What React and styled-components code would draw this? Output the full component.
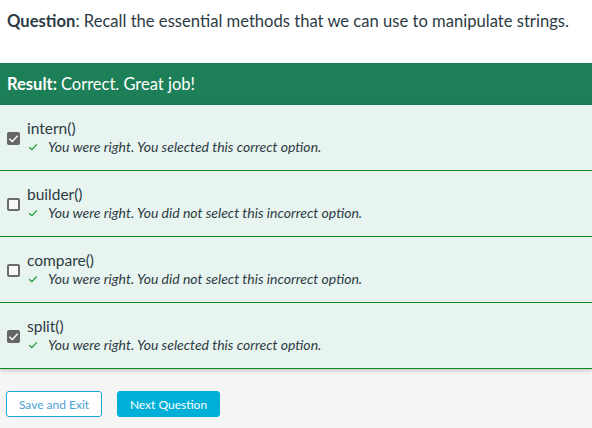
import React from 'react';
import styled, { createGlobalStyle } from 'styled-components';

const GlobalStyle = createGlobalStyle`
  html, body {
    margin: 0;
    padding: 0;
    background: #ffffff;
    font-family: Lato, "Open Sans", sans-serif;
    color: #2d3b45;
  }
`;

const Page = styled.div`
  width: 592px;
  height: 428px;
  display: flex;
  flex-direction: column;
  overflow: hidden;
`;

const Question = styled.div`
  padding: 10px 7px 0 7px;
  height: 53px;
  font-size: 16.6px;
  line-height: 22px;
  color: #2d3b45;
  box-sizing: border-box;
  white-space: nowrap;

  b {
    font-weight: 700;
  }
`;

const ResultBar = styled.div`
  height: 42px;
  background: #1d7f57;
  color: #ffffff;
  display: flex;
  align-items: center;
  padding: 0 7px;
  font-size: 16.5px;
  margin-top: 10px;

  b {
    font-weight: 700;
    margin-right: 4px;
  }
`;

const Options = styled.div`
  display: flex;
  flex-direction: column;
  box-shadow: 0 2px 4px rgba(0, 0, 0, 0.18);
  position: relative;
  z-index: 1;
`;

const Row = styled.div`
  height: 66px;
  box-sizing: border-box;
  background: #e8f4ef;
  border-bottom: 1px solid #0b8a1d;
  display: flex;
  align-items: center;
  padding-left: 7px;
`;

const Box = styled.span`
  width: 13px;
  height: 13px;
  box-sizing: border-box;
  border-radius: 2px;
  flex: 0 0 13px;
  margin-right: 7px;
  margin-top: 2px;
  display: flex;
  align-items: center;
  justify-content: center;
  background: ${(p) => (p.$checked ? '#666666' : '#f8f8f8')};
  border: ${(p) => (p.$checked ? 'none' : '2px solid #6a6a6a')};
`;

const Content = styled.div`
  display: flex;
  flex-direction: column;
`;

const Title = styled.div`
  font-size: 15.5px;
  line-height: 19px;
  color: #2d3b45;
`;

const Feedback = styled.div`
  display: flex;
  align-items: center;
  font-size: 14px;
  line-height: 18px;
  font-style: italic;
  color: #2d3b45;
  padding-left: 1px;

  svg {
    margin-right: 10px;
  }
`;

const Footer = styled.div`
  flex: 1;
  background: #f5f5f5;
  display: flex;
  align-items: flex-start;
  gap: 15px;
  padding: 22px 6px 0 6px;
`;

const Button = styled.button`
  height: 26px;
  box-sizing: border-box;
  border-radius: 3px;
  font-family: Lato, "Open Sans", sans-serif;
  font-size: 12px;
  padding: 0;
  width: ${(p) => p.$width}px;
  cursor: pointer;
  background: ${(p) => (p.$primary ? '#00afd8' : '#ffffff')};
  color: ${(p) => (p.$primary ? '#ffffff' : '#4a9fd3')};
  border: 1px solid ${(p) => (p.$primary ? '#00afd8' : '#1aa8d8')};
`;

const Tick = ({ color, size }) => (
  <svg width={size} height={size} viewBox="0 0 10 10">
    <path d="M1.2 5.2 L3.9 7.7 L8.8 2.4" fill="none" stroke={color} strokeWidth="1.3" />
  </svg>
);

const options = [
  { name: 'intern()', checked: true, note: 'You were right. You selected this correct option.' },
  { name: 'builder()', checked: false, note: 'You were right. You did not select this incorrect option.' },
  { name: 'compare()', checked: false, note: 'You were right. You did not select this incorrect option.' },
  { name: 'split()', checked: true, note: 'You were right. You selected this correct option.' },
];

const App = () => (
  <Page>
    <GlobalStyle />
    <Question>
      <b>Question</b>: Recall the essential methods that we can use to manipulate strings.
    </Question>
    <ResultBar>
      <b>Result:</b> Correct. Great job!
    </ResultBar>
    <Options>
      {options.map((o) => (
        <Row key={o.name}>
          <Box $checked={o.checked}>
            {o.checked && <Tick color="#ffffff" size={11} />}
          </Box>
          <Content>
            <Title>{o.name}</Title>
            <Feedback>
              <Tick color="#1f9b3a" size={10} />
              {o.note}
            </Feedback>
          </Content>
        </Row>
      ))}
    </Options>
    <Footer>
      <Button $width={96}>Save and Exit</Button>
      <Button $primary $width={103}>Next Question</Button>
    </Footer>
  </Page>
);

export default App;
